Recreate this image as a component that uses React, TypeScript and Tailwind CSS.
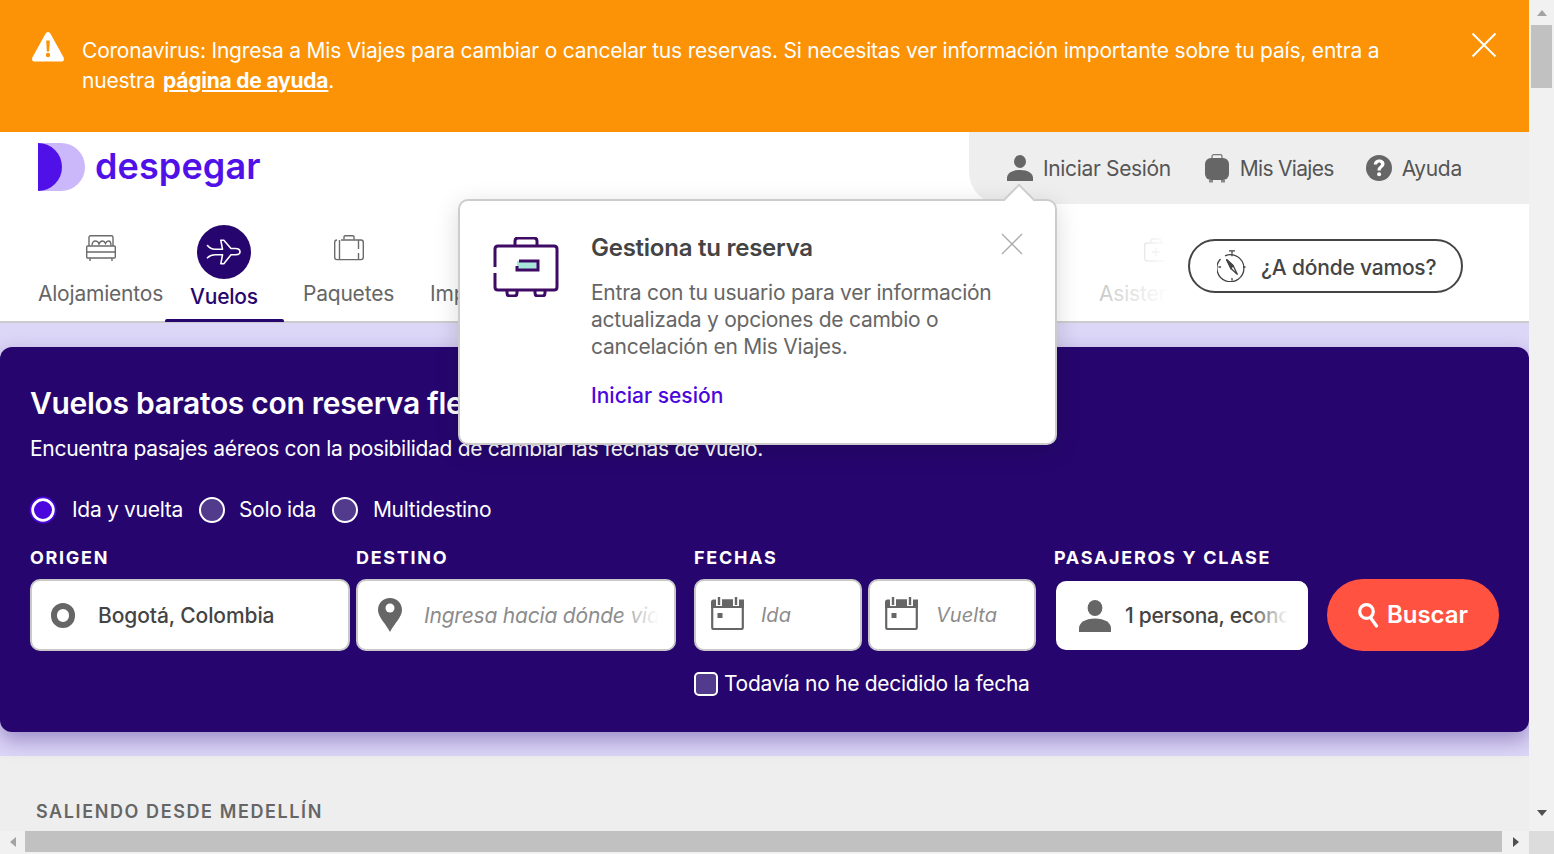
import React from "react";

const Bed = () => (
  <svg width="30" height="26" viewBox="0 0 30 26" fill="none" stroke="#6b6b6b" strokeWidth="1.400">
    <path d="M3 11V2.500Q3 .8 4.700 .8H25.300Q27 .8 27 2.500V11" />
    <path d="M6 10.500c0-3 1.500-4.500 3.500-4.500s3 1.200 3.500 3c.6-2 2-3 3.500-3 1.700 0 2.500 1 3 2.400.6-1.400 1.600-2.400 3-2.400 1.800 0 2.500 2 2.500 4.500" />
    <rect x=".7" y="11" width="28.600" height="12" rx="1" />
    <path d="M.7 17h28.600M4 23v3M26 23v3" />
  </svg>
);

const Plane = () => (
  <svg width="35" height="26" viewBox="0 0 35 26" fill="none" stroke="#fff" strokeWidth="1.600" strokeLinejoin="round" strokeLinecap="round">
    <path d="M1.500 6.500C3.500 9 6 10.200 9 10.200h7.500L14.800 1.200h3L25 9.500h4.500c2.800 0 4.500 1.500 4.500 3.300 0 1.800-1.700 3-4.500 3H25l-7.200 9h-3l1.700-9H9c-3 0-5.500 1-7.500 3" />
  </svg>
);

const Luggage = () => (
  <svg width="30" height="26" viewBox="0 0 30 26" fill="none" stroke="#6b6b6b" strokeWidth="1.400">
    <path d="M10 4.500V2q0-1.300 1.300-1.300h7.400Q20 .7 20 2v2.500" />
    <path d="M7 5H27q2.300 0 2.300 2.300v15q0 2.300-2.300 2.300H3q-2.300 0-2.300-2.300V7.300Q.7 5 3 5" />
    <path d="M5.500 5v19.500M24.500 5v9M24.500 18v6.500" />
  </svg>
);

const MedKit = () => (
  <svg width="24" height="24" viewBox="0 0 24 24" fill="none" stroke="#aaa" strokeWidth="1.300">
    <path d="M7 5V2.500Q7 1 8.500 1h7Q17 1 17 2.500V5" />
    <rect x=".7" y="5" width="22.600" height="18" rx="2.500" />
    <path d="M12 10v8M8 14h8" />
  </svg>
);

const Person = ({ w = 26, h = 26 }: { w?: number; h?: number }) => (
  <svg width={w} height={h} viewBox="0 0 26 26" fill="#666">
    <ellipse cx="13" cy="6.500" rx="6" ry="6.500" />
    <path d="M0 26v-3c0-4.500 5-8 13-8s13 3.500 13 8v3z" />
  </svg>
);

const Suitcase = () => (
  <svg width="24" height="29" viewBox="0 0 24 29" fill="#666">
    <path d="M7 5V2.500Q7 .7 9 .7h6q2 0 2 1.800V5" fill="none" stroke="#777" strokeWidth="1.200" />
    <rect y="4" width="24" height="22" rx="6" />
    <rect x="4" y="26" width="4" height="2.500" fill="#888" />
    <rect x="16" y="26" width="4" height="2.500" fill="#888" />
  </svg>
);

const Help = () => (
  <svg width="26" height="26" viewBox="0 0 26 26">
    <circle cx="13" cy="13" r="13" fill="#666" />
    <path d="M7.800 9.500C8 6 10.300 4.500 13.300 4.500c3 0 5.200 1.700 5.200 4.300 0 3.800-3.800 3.700-3.800 6.700h-3.200c0-4 3.500-4.300 3.500-6.400 0-1-.7-1.700-1.800-1.700-1.200 0-2 .7-2.200 2.100z" fill="#fff" />
    <circle cx="13.100" cy="19.300" r="2" fill="#fff" />
  </svg>
);

const Compass = () => (
  <svg width="30" height="32" viewBox="0 0 30 32" fill="none" stroke="#444" strokeWidth="1.300">
    <path d="M12 .8h6M15 .8v3" />
    <path d="M8 5.800a13.500 13.500 0 1 1-4.500 3.200" />
    <path d="M9.500 9.500l6.500 6 4.500 9-6.500-6z" fill="#fff" />
    <path d="M9.500 9.500l4.500 9 2-3z" fill="#444" />
    <path d="M15 3.800v2.500M15 28v2.500M1.500 17H4M26 17h2.500" />
  </svg>
);

const Calendar = () => (
  <svg width="33" height="33" viewBox="0 0 33 33" fill="none">
    <rect x="1.200" y="6" width="30.600" height="26" rx="1.500" fill="#fff" stroke="#666" strokeWidth="2.200" />
    <path d="M0 5q0-2.500 2.500-2.500H33V11H0z" fill="#666" />
    <path d="M5 0v9h6V0zM22 0v9h6V0z" fill="#fff" />
    <rect x="6.800" y="0" width="2.400" height="8" fill="#666" />
    <rect x="23.800" y="0" width="2.400" height="8" fill="#666" />
    <path d="M11 2.500h11v8H11z" fill="#666" />
    <rect x="6.500" y="16" width="5" height="5" fill="#666" />
  </svg>
);

const Radio = ({ on }: { on?: boolean }) =>
  on ? (
    <span className="w-[26px] h-[26px] rounded-full bg-[#4a06dc] border-[3px] border-white ring-2 ring-[#4a06dc] scale-90" />
  ) : (
    <span className="w-[26px] h-[26px] rounded-full bg-[#523a8c] border-2 border-white" />
  );

const Field = ({ label, className, children }: { label: string; className?: string; children: React.ReactNode }) => (
  <div className={className}>
    <div className="h-[22px] mb-[10px] text-[18px] leading-[22px] font-bold tracking-[1.700px] text-white uppercase">{label}</div>
    {children}
  </div>
);

const boxClass =
  "h-[72px] bg-white rounded-[10px] border-2 border-[#c9c9c9] flex items-center overflow-hidden relative";

export default function App() {
  return (
    <div className="w-[1554px] h-[854px] overflow-hidden grid grid-cols-[1529px_25px] grid-rows-[831px_23px] bg-[#eee] font-['Inter','Liberation_Sans',sans-serif]">
      <main className="relative overflow-hidden flex flex-col">
        {/* banner */}
        <div className="h-[132px] shrink-0 bg-[#fc9206] flex items-start text-white pl-[32px] pt-[32px]">
          <svg width="32" height="30" viewBox="0 0 32 30" className="shrink-0">
            <path d="M16 0q1.500 0 2.500 1.700l13 23.500Q33 29.500 29 29.500H3Q-1 29.500 .5 25.200l13-23.500Q14.500 0 16 0z" fill="#fff" />
            <path d="M14.200 8.500h3.600l-.6 11h-2.400z" fill="#fc9206" />
            <circle cx="16" cy="23" r="2.200" fill="#fc9206" />
          </svg>
          <p className="ml-[18px] mt-[4px] w-[1305px] text-[21px] leading-[30px] tracking-[-0.210px]">
            Coronavirus: Ingresa a Mis Viajes para cambiar o cancelar tus reservas. Si necesitas ver información importante sobre tu país, entra a nuestra{" "}
            <a className="ml-[2px] font-bold underline">página de ayuda</a>.
          </p>
          <svg width="26" height="26" viewBox="0 0 26 26" className="absolute left-[1471px] top-[32px]" stroke="#fff" strokeWidth="2">
            <path d="M1.500 1.500l23 23M24.500 1.500l-23 23" />
          </svg>
        </div>

        {/* header */}
        <header className="h-[72px] shrink-0 bg-white flex justify-between">
          <div className="flex items-start pl-[38px] pt-[11px] gap-[9px]">
            <svg width="48" height="48" viewBox="0 0 48 48" className="shrink-0">
              <path d="M0 0h23a24 24 0 0 1 0 48H0z" fill="#cbb8fa" />
              <path d="M0 0a24 24 0 0 1 0 48z" fill="#5011e8" />
            </svg>
            <span className="mt-[1px] text-[36px] leading-[44px] font-semibold tracking-[0.100px] text-[#5011e8]">despegar</span>
          </div>
          <div className="w-[560px] bg-[#eee] rounded-bl-[32px] flex items-center pl-[38px] text-[#555] text-[21px] tracking-[-0.350px]">
            <Person />
            <span className="ml-[10px] mt-[1px]">Iniciar Sesión</span>
            <span className="ml-[34px] flex"><Suitcase /></span>
            <span className="ml-[11px] mt-[1px] tracking-[-0.700px]">Mis Viajes</span>
            <span className="ml-[32px] flex"><Help /></span>
            <span className="ml-[10px] mt-[1px]">Ayuda</span>
          </div>
        </header>

        {/* nav */}
        <nav className="h-[119px] shrink-0 bg-white border-b-2 border-[#ccc] flex items-stretch pl-[37px] pr-[66px] text-[21px] text-[#666] tracking-[-0.200px]">
          <div className="w-[127px] flex flex-col items-center pt-[31px]">
            <Bed />
            <span className="mt-[19px] leading-[28px] whitespace-nowrap">Alojamientos</span>
          </div>
          <div className="w-[119px] relative flex flex-col items-center pt-[21px]">
            <span className="w-[54px] h-[54px] rounded-full bg-[#26066e] flex items-center justify-center"><Plane /></span>
            <span className="ml-[1px] mt-[4px] leading-[28px] font-medium text-[#26066e]">Vuelos</span>
            <span className="absolute left-[1px] right-[-1px] bottom-[-1px] h-[3px] rounded-t-[2px] bg-[#26066e]" />
          </div>
          <div className="ml-[20px] w-[91px] flex flex-col items-center pt-[31px]">
            <Luggage />
            <span className="mt-[19px] leading-[28px]">Paquetes</span>
          </div>
          <div className="ml-[36px] pt-[76px] leading-[28px] flex-1 overflow-hidden">Imperdibles</div>
          <div className="w-[69px] overflow-hidden flex flex-col items-start pt-[34px] text-[#bbb] relative">
            <span className="ml-[45px] flex"><MedKit /></span>
            <span className="mt-[18px] leading-[28px]">Asistencias</span>
            <span className="absolute inset-0 bg-gradient-to-r from-white/20 to-white" />
          </div>
          <div className="ml-[20px] mt-[35px] w-[275px] h-[54px] shrink-0 rounded-full border-2 border-[#444] flex items-center pl-[27px] gap-[14px] font-medium text-[#444]">
            <Compass />
            <span className="mt-[4px]">¿A dónde vamos?</span>
          </div>
        </nav>

        {/* search area */}
        <section className="h-[433px] shrink-0 bg-[#dcd6f7] pt-[24px]">
          <div className="h-[385px] rounded-[12px] bg-[#26066e] px-[30px] pt-[36px] text-white shadow-[0_8px_20px_rgba(38,6,110,0.35)]">
            <h1 className="text-[30px] leading-[40px] font-semibold tracking-[-0.300px]">Vuelos baratos con reserva flexible</h1>
            <p className="mt-[12px] text-[21px] leading-[28px] tracking-[-0.300px]">Encuentra pasajes aéreos con la posibilidad de cambiar las fechas de vuelo.</p>
            <div className="mt-[32px] flex items-center text-[21px] tracking-[-0.300px] h-[30px]">
              <Radio on />
              <span className="ml-[16px]">Ida y vuelta</span>
              <span className="ml-[16px] flex"><Radio /></span>
              <span className="ml-[14px]">Solo ida</span>
              <span className="ml-[16px] flex"><Radio /></span>
              <span className="ml-[15px]">Multidestino</span>
            </div>
            <div className="mt-[22px] flex items-start">
              <Field label="Origen" className="w-[320px]">
                <div className={boxClass}>
                  <span className="ml-[19px] w-[24px] h-[25px] rounded-full border-[6px] border-[#666]" />
                  <span className="ml-[23px] mt-[2px] text-[21px] font-medium text-[#444] tracking-[-0.100px]">Bogotá, Colombia</span>
                </div>
              </Field>
              <Field label="Destino" className="ml-[6px] w-[320px]">
                <div className={boxClass}>
                  <svg width="24" height="34" viewBox="0 0 24 34" className="ml-[20px] shrink-0">
                    <path d="M12 0C5 0 0 5 0 12c0 7 8 14 12 22 4-8 12-15 12-22C24 5 19 0 12 0z" fill="#666" />
                    <circle cx="12" cy="10" r="4.500" fill="#fff" />
                  </svg>
                  <span className="ml-[22px] mt-[2px] text-[21px] italic text-[#8c8c8c] whitespace-nowrap tracking-[-0.200px]">Ingresa hacia dónde viajas</span>
                  <span className="absolute right-0 top-0 bottom-0 w-[56px] bg-[linear-gradient(to_right,transparent,white_72%)]" />
                </div>
              </Field>
              <Field label="Fechas" className="ml-[18px] w-[342px]">
                <div className="flex gap-[6px]">
                  <div className={boxClass + " w-[168px]"}>
                    <span className="ml-[15px] mb-[4px] flex"><Calendar /></span>
                    <span className="ml-[17px] text-[20px] italic text-[#8c8c8c]">Ida</span>
                  </div>
                  <div className={boxClass + " w-[168px]"}>
                    <span className="ml-[15px] mb-[4px] flex"><Calendar /></span>
                    <span className="ml-[18px] text-[20px] italic text-[#8c8c8c]">Vuelta</span>
                  </div>
                </div>
                <label className="mt-[17px] flex items-center text-[21px] tracking-[-0.300px]">
                  <span className="w-[24px] h-[24px] rounded-[5px] border-2 border-white bg-[#523a8c]" />
                  <span className="ml-[6px] whitespace-nowrap">Todavía no he decidido la fecha</span>
                </label>
              </Field>
              <Field label="Pasajeros y clase" className="ml-[18px] w-[254px]">
                <div className="ml-[2px] mt-[12px] w-[252px] h-[69px] bg-white rounded-[10px] flex items-center relative overflow-hidden">
                  <span className="ml-[23px] flex"><Person w={32} h={32} /></span>
                  <span className="ml-[14px] text-[21px] font-medium text-[#444] whitespace-nowrap tracking-[-0.300px]">1 persona, economy</span>
                  <span className="absolute right-0 top-0 bottom-0 w-[60px] bg-[linear-gradient(to_right,transparent,white_66%)]" />
                </div>
              </Field>
              <button className="ml-[19px] mt-[32px] w-[172px] h-[72px] rounded-[36px] bg-[#ff5240] text-white flex items-center justify-center gap-[8px] text-[24px] font-semibold tracking-[0px]">
                <svg width="21" height="25" viewBox="0 0 21 25" fill="none" stroke="#fff" strokeWidth="3.200" strokeLinecap="round">
                  <circle cx="8.500" cy="8.500" r="6.800" />
                  <path d="M12.500 14.500l6 8.500" />
                </svg>
                Buscar
              </button>
            </div>
          </div>
        </section>

        {/* below */}
        <div className="pl-[36px] pt-[44px] text-[18px] leading-[24px] font-semibold tracking-[1.600px] text-[#666]">SALIENDO DESDE MEDELLÍN</div>

        {/* popover */}
        <aside className="absolute left-[458px] top-[199px] w-[599px] h-[246px] bg-white rounded-[10px] border-2 border-[#ccc] shadow-[0_6px_24px_rgba(0,0,0,0.15)] flex">
          <span className="absolute left-[548px] top-[-13px] w-[22px] h-[22px] rotate-45 bg-white border-l-2 border-t-2 border-[#ccc]" />
          <svg width="66" height="60" viewBox="0 0 66 60" fill="none" className="ml-[33px] mt-[36px] shrink-0">
            <path d="M22 9V4q0-3 3-3h16q3 0 3 3v5" stroke="#3f0a63" strokeWidth="3" />
            <path d="M2 30V12q0-3 3-3h56q3 0 3 3v38q0 3-3 3H5q-3 0-3-3V36" stroke="#3f0a63" strokeWidth="3" />
            <path d="M14 53v3q0 3 3 3h4q3 0 3-3v-3M42 53v3q0 3 3 3h4q3 0 3-3v-3" stroke="#3f0a63" strokeWidth="3" />
            <rect x="24" y="24" width="21" height="9" fill="#a8e6dc" />
            <path d="M26 24h19v9H24v-4" stroke="#3f0a63" strokeWidth="3" />
          </svg>
          <div className="ml-[32px] pt-[33px] w-[420px]">
            <h2 className="text-[24px] leading-[28px] font-semibold text-[#444] tracking-[-0.250px]">Gestiona tu reserva</h2>
            <p className="mt-[17px] text-[21px] leading-[27px] text-[#666] tracking-[-0.250px]">
              Entra con tu usuario para ver información actualizada y opciones de cambio o cancelación en Mis Viajes.
            </p>
            <a className="block mt-[22px] text-[21px] leading-[28px] font-medium text-[#4a06dc] tracking-[0px]">Iniciar sesión</a>
          </div>
          <svg width="22" height="22" viewBox="0 0 22 22" className="absolute left-[541px] top-[32px]" stroke="#aaa" strokeWidth="1.300">
            <path d="M1 1l20 20M21 1L1 21" />
          </svg>
        </aside>
      </main>

      {/* vertical scrollbar */}
      <div className="bg-[#f1f1f1] flex flex-col items-center">
        <div className="h-[25px] flex items-center justify-center">
          <span className="w-0 h-0 border-x-[5.500px] border-x-transparent border-b-[6px] border-b-[#a3a3a3]" />
        </div>
        <div className="w-[21px] h-[63px] bg-[#c1c1c1]" />
        <div className="flex-1" />
        <div className="h-[32px] flex items-start justify-center pt-[11px]">
          <span className="w-0 h-0 border-x-[5.500px] border-x-transparent border-t-[6px] border-t-[#505050]" />
        </div>
      </div>

      {/* horizontal scrollbar */}
      <div className="bg-[#f1f1f1] flex items-start">
        <div className="w-[25px] h-[21px] flex items-center justify-center">
          <span className="w-0 h-0 border-y-[5.500px] border-y-transparent border-r-[6px] border-r-[#a3a3a3]" />
        </div>
        <div className="w-[1477px] h-[21px] bg-[#c1c1c1]" />
        <div className="flex-1 h-[21px] flex items-center justify-center">
          <span className="w-0 h-0 border-y-[5.500px] border-y-transparent border-l-[6px] border-l-[#505050]" />
        </div>
      </div>
      <div className="bg-[#dcdcdc]" />
    </div>
  );
}
